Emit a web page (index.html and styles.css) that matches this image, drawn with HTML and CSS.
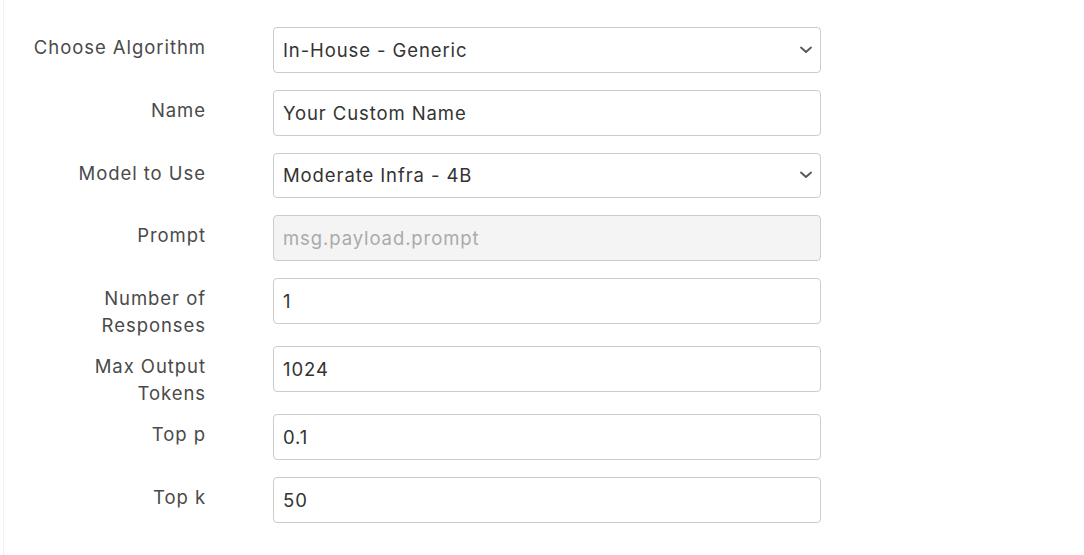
FILE: index.html
```html
<!DOCTYPE html>
<html lang="en">
<head>
<meta charset="utf-8">
<title>Algorithm settings</title>
<link rel="stylesheet" href="styles.css">
</head>
<body>
<div class="page">
  <form class="form">
    <div class="row">
      <label class="label">Choose Algorithm</label>
      <div class="field select">
        <span class="value">In-House - Generic</span>
        <svg class="chev" width="12" height="8" viewBox="0 0 12 8"><path d="M1 1.5 L6 6 L11 1.5" fill="none" stroke="#555" stroke-width="1.8" stroke-linecap="round" stroke-linejoin="round"/></svg>
      </div>
    </div>
    <div class="row">
      <label class="label">Name</label>
      <div class="field"><span class="value">Your Custom Name</span></div>
    </div>
    <div class="row">
      <label class="label">Model to Use</label>
      <div class="field select">
        <span class="value">Moderate Infra - 4B</span>
        <svg class="chev" width="12" height="8" viewBox="0 0 12 8"><path d="M1 1.5 L6 6 L11 1.5" fill="none" stroke="#555" stroke-width="1.8" stroke-linecap="round" stroke-linejoin="round"/></svg>
      </div>
    </div>
    <div class="row">
      <label class="label">Prompt</label>
      <div class="field disabled"><span class="value">msg.payload.prompt</span></div>
    </div>
    <div class="row tall">
      <label class="label">Number of<br>Responses</label>
      <div class="field"><span class="value">1</span></div>
    </div>
    <div class="row tall">
      <label class="label">Max Output<br>Tokens</label>
      <div class="field"><span class="value">1024</span></div>
    </div>
    <div class="row">
      <label class="label">Top p</label>
      <div class="field"><span class="value">0.1</span></div>
    </div>
    <div class="row">
      <label class="label">Top k</label>
      <div class="field"><span class="value">50</span></div>
    </div>
  </form>
</div>
</body>
</html>
```

FILE: styles.css
```css
html, body {
  margin: 0;
  padding: 0;
  background: #fff;
}
body {
  font-family: Inter, "Open Sans", sans-serif;
  color: #444;
}
.page {
  margin-left: 3px;
  border-left: 1px dotted #e6e6e6;
  height: 555px;
  box-sizing: border-box;
}
.form {
  display: flex;
  flex-direction: column;
  gap: 17px;
  padding-top: 27px;
}
.row {
  display: grid;
  grid-template-columns: 202px 548px;
  column-gap: 67px;
  height: 45.75px;
}
.row.tall {
  height: 51px;
}
.label {
  text-align: right;
  font-size: 18.5px;
  line-height: 27px;
  padding-top: 7px;
  color: #4a4a4a;
  white-space: nowrap;
  letter-spacing: 0.95px;
}
.field {
  box-sizing: border-box;
  height: 45.75px;
  border: 1px solid #ccc;
  border-radius: 4px;
  display: flex;
  align-items: center;
  padding: 0 9px;
  font-size: 18.5px;
  color: #333;
  background: #fff;
  letter-spacing: 0.9px;
}
.field.disabled {
  background: #f4f4f4;
  color: #aaa;
}
.select {
  justify-content: space-between;
  padding-right: 8px;
}
.value {
  white-space: nowrap;
}
.chev {
  display: block;
  letter-spacing: 0;
}
```
